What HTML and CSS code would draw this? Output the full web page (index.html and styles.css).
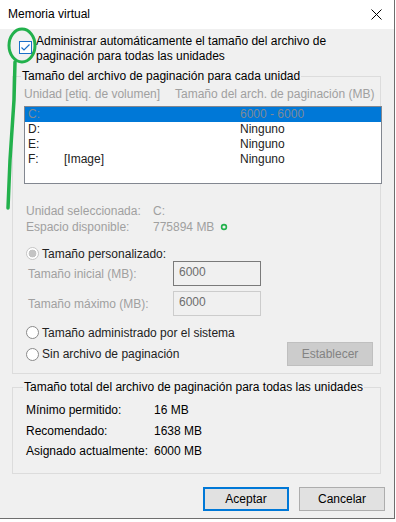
FILE: index.html
```html
<!DOCTYPE html>
<html lang="es">
<head>
<meta charset="UTF-8">
<meta name="viewport" content="width=device-width, initial-scale=1.0">
<title>Memoria virtual</title>
<link rel="stylesheet" href="styles.css">
</head>
<body>

<div class="window">
    <div class="titlebar">
        <span class="title">Memoria virtual</span>
        <svg class="close" width="11" height="11" viewBox="0 0 11 11">
            <path d="M0.5 0.5 L10.5 10.5 M10.5 0.5 L0.5 10.5" stroke="#000" stroke-width="1" fill="none"/>
        </svg>
    </div>

    <div class="content">
        <label class="auto">
            <span class="checkbox">
                <svg width="11" height="11" viewBox="0 0 11 11">
                    <path d="M1.5 5.5 L4 8 L9.5 2.5" stroke="#1b6fc8" stroke-width="1.2" fill="none"/>
                </svg>
            </span>
            <span class="auto-text">Administrar automáticamente el tamaño del archivo de<br>paginación para todas las unidades</span>
        </label>

        <fieldset class="group drives">
            <legend>Tamaño del archivo de paginación para cada unidad</legend>
            <div class="cols disabled">
                <span class="col-drive">Unidad [etiq. de volumen]</span>
                <span>Tamaño del arch. de paginación (MB)</span>
            </div>
            <div class="list">
                <div class="row selected"><span class="drive">C:</span><span class="vol"></span><span>6000 - 6000</span></div>
                <div class="row"><span class="drive">D:</span><span class="vol"></span><span>Ninguno</span></div>
                <div class="row"><span class="drive">E:</span><span class="vol"></span><span>Ninguno</span></div>
                <div class="row"><span class="drive">F:</span><span class="vol">[Image]</span><span>Ninguno</span></div>
            </div>

            <div class="info disabled">
                <div class="info-row"><span class="info-label">Unidad seleccionada:</span><span>C:</span></div>
                <div class="info-row"><span class="info-label">Espacio disponible:</span><span>775894 MB</span></div>
            </div>

            <div class="option first">
                <span class="radio checked"></span>
                <span>Tamaño personalizado:</span>
            </div>
            <div class="size-row">
                <span class="size-label">Tamaño inicial (MB):</span>
                <span class="field focused">6000</span>
            </div>
            <div class="size-row second">
                <span class="size-label">Tamaño máximo (MB):</span>
                <span class="field">6000</span>
            </div>
            <div class="option system">
                <span class="radio"></span>
                <span>Tamaño administrado por el sistema</span>
            </div>
            <div class="option-row">
                <div class="option">
                    <span class="radio"></span>
                    <span>Sin archivo de paginación</span>
                </div>
                <button type="button" class="btn-set" disabled>Establecer</button>
            </div>
        </fieldset>

        <fieldset class="group totals">
            <legend>Tamaño total del archivo de paginación para todas las unidades</legend>
            <div class="total-row"><span class="total-label">Mínimo permitido:</span><span>16 MB</span></div>
            <div class="total-row"><span class="total-label">Recomendado:</span><span>1638 MB</span></div>
            <div class="total-row"><span class="total-label">Asignado actualmente:</span><span>6000 MB</span></div>
        </fieldset>

        <div class="actions">
            <button type="button" class="btn default">Aceptar</button>
            <button type="button" class="btn">Cancelar</button>
        </div>
    </div>

    <!-- hand-drawn marker over the checkbox -->
    <svg class="marker" width="60" height="220" viewBox="0 0 60 220">
        <ellipse cx="22" cy="45.5" rx="13" ry="16.5" stroke="#22b14c" stroke-width="3" fill="none"/>
        <path d="M15 62 L14 100 L10 160 L8 208" stroke="#22b14c" stroke-width="3.5" fill="none" stroke-linecap="round"/>
    </svg>
    <svg class="dot" width="8" height="8" viewBox="0 0 8 8">
        <circle cx="4" cy="4" r="2.4" stroke="#22b14c" stroke-width="1.6" fill="none"/>
    </svg>
</div>

</body>
</html>
```

FILE: styles.css
```css
body {
    margin: 0;
    padding: 0;
    background-color: #fff;
    font-family: "Liberation Sans", Arial, sans-serif;
    font-size: 12px;
    color: #000;
}

.window {
    position: relative;
    width: 394px;
    height: 518px;
    background-color: #f0f0f0;
    border-right: 1px solid #6e6e6e;
    border-bottom: 1px solid #6e6e6e;
}

.titlebar {
    display: flex;
    align-items: center;
    justify-content: space-between;
    height: 29px;
    padding: 0 12px 0 8px;
    background-color: #fff;
}

.title {
    line-height: 15px;
    margin-top: -1px;
}

.disabled {
    color: #a0a0a0;
}

/* checkbox row */
.auto {
    display: flex;
    align-items: flex-start;
    padding: 5px 0 0 19px;
    line-height: 15px;
}

.checkbox {
    display: flex;
    align-items: center;
    justify-content: center;
    width: 13px;
    height: 13px;
    box-sizing: border-box;
    margin: 7px 4px 0 0;
    border: 1px solid #1b6fc8;
    background-color: #fff;
}

/* group boxes */
.group {
    margin: 5px 13px 0 12px;
    padding: 0 0 7px 11px;
    border: 1px solid #dcdcdc;
    min-width: 0;
}

.group legend {
    margin-left: -3px;
    padding: 0 1px;
    line-height: 15px;
}

.cols {
    display: flex;
    height: 15px;
    line-height: 15px;
    margin-top: 3px;
}

.col-drive {
    width: 151px;
}

.list {
    width: 358px;
    height: 78px;
    box-sizing: border-box;
    margin-top: 4px;
    border: 1px solid #828790;
    background-color: #fff;
    color: #222;
}

.row {
    display: flex;
    height: 15px;
    line-height: 15px;
    padding-left: 3px;
}

.row.selected {
    background-color: #0078d7;
    color: #7e8a96;
}

.drive {
    width: 36px;
}

.vol {
    width: 176px;
}

.info {
    margin-top: 19px;
    padding-left: 2px;
}

.info-row {
    display: flex;
    line-height: 16px;
    height: 16px;
}

.info-label {
    width: 127px;
}

.option {
    display: flex;
    align-items: center;
    height: 15px;
    padding-left: 2px;
    color: #222;
}

.option.first {
    margin-top: 11px;
}

.option.system {
    margin-top: 9px;
}

.radio {
    width: 13px;
    height: 13px;
    box-sizing: border-box;
    margin-right: 3px;
    border: 1px solid #8a8a8a;
    border-radius: 50%;
    background-color: #fff;
}

.radio.checked {
    border-color: #c6c6c6;
    background: radial-gradient(circle, #c4c4c4 0 3.6px, #fff 4.2px);
}

.size-row {
    display: flex;
    align-items: center;
    height: 25px;
    padding-left: 4px;
    color: #a0a0a0;
}

.size-row.second {
    margin-top: 5px;
}

.size-label {
    width: 145px;
}

.field {
    width: 88px;
    height: 25px;
    box-sizing: border-box;
    padding: 3px 0 0 5px;
    line-height: 15px;
    border: 1px solid #cccccc;
    color: #6d6d6d;
}

.field.focused {
    border-color: #7a7a7a;
}

.option-row {
    display: flex;
    align-items: center;
    justify-content: space-between;
    height: 24px;
    margin-top: 2px;
    padding-right: 7px;
}

.btn-set {
    width: 86px;
    height: 24px;
    padding: 0;
    border: 1px solid #bfbfbf;
    background-color: #cccccc;
    color: #838383;
    font-family: inherit;
    font-size: 12px;
}

.totals {
    margin-top: 6px;
    padding: 0 0 11px 13px;
}

.total-row {
    display: flex;
    height: 20.5px;
    line-height: 20.5px;
}

.total-row:first-of-type {
    margin-top: 5px;
}

.total-label {
    width: 128px;
}

.actions {
    display: flex;
    justify-content: flex-end;
    gap: 10px;
    margin-top: 13px;
    padding-right: 9px;
}

.btn {
    width: 86px;
    height: 24px;
    padding: 0;
    border: 1px solid #adadad;
    background-color: #e1e1e1;
    font-family: inherit;
    font-size: 12px;
    color: #000;
}

.btn.default {
    border: 2px solid #0078d7;
}

.marker {
    position: absolute;
    left: 0;
    top: 0;
}

.dot {
    position: absolute;
    left: 220px;
    top: 223px;
}
```
